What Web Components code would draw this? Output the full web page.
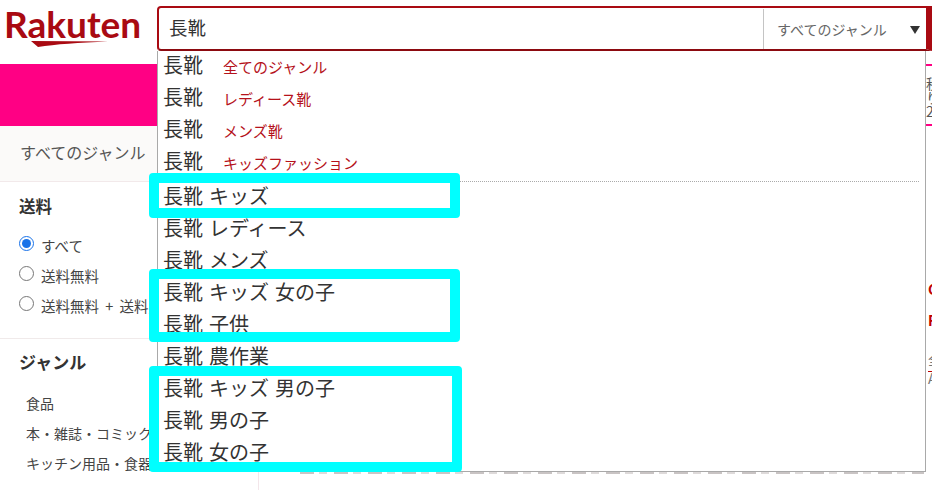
<!DOCTYPE html>
<html lang="ja">
<head>
<meta charset="utf-8">
<title>Rakuten</title>
<style>
  html, body { margin: 0; padding: 0; background: #fff; height: 100%; overflow: hidden; }
  body { font-family: "Noto Sans CJK JP", "Liberation Sans", sans-serif; color: #333; }
</style>
</head>
<body>
<rk-page>
  <rk-header slot="header"></rk-header>
  <rk-banner slot="banner"></rk-banner>
  <rk-sidebar slot="side"></rk-sidebar>
  <rk-main slot="main"></rk-main>
</rk-page>

<script>
const JP = `"Noto Sans CJK JP", "Liberation Sans", sans-serif`;

class RkPage extends HTMLElement {
  constructor() {
    super();
    this.attachShadow({ mode: "open" }).innerHTML = `
      <style>
        :host { display: block; width: 932px; height: 490px; overflow: hidden; position: relative; }
        .body { display: grid; grid-template-columns: 259px 1fr; height: 364px; }
      </style>
      <slot name="header"></slot>
      <slot name="banner"></slot>
      <div class="body">
        <slot name="side"></slot>
        <slot name="main"></slot>
      </div>`;
  }
}

class RkHeader extends HTMLElement {
  constructor() {
    super();
    this.attachShadow({ mode: "open" }).innerHTML = `
      <style>
        :host { display: flex; height: 64px; box-sizing: border-box; padding: 6px 0 0 4px; gap: 21px; align-items: flex-start; }
        .logo { width: 132px; height: 44px; position: relative; color: #a90a12; flex: none; }
        .word { font: 700 37px/40px "Lato", sans-serif; letter-spacing: 0; display: block; margin-top: -2px; white-space: nowrap; }
        svg { position: absolute; left: 0; top: 32px; }
      </style>
      <div class="logo">
        <span class="word">Rakuten</span>
        <svg width="132" height="14" viewBox="0 0 132 14"><path d="M27 3 L104 3.5 Q60 5 34 9 Z" fill="#a90a12"/></svg>
      </div>
      <rk-search></rk-search>`;
  }
}

class RkSearch extends HTMLElement {
  constructor() {
    super();
    this.attachShadow({ mode: "open" }).innerHTML = `
      <style>
        :host { display: block; position: relative; width: 775px; flex: none; }
        .box { height: 45px; box-sizing: border-box; border: 2px solid #a90a12; border-right-width: 6px; border-bottom-color: #8c0a10; border-radius: 4px 0 0 4px; display: flex; align-items: center; background: #fff; }
        .q { flex: 1; padding-left: 10px; font: 400 18.5px/24px ${JP}; color: #333; margin-top: -4px; }
        .genre { width: 163px; box-sizing: border-box; height: 40px; border-left: 1px solid #c4c4c4; display: flex; align-items: center; padding-left: 13px; font: 400 14px/20px ${JP}; color: #666; }
        .arrow { margin-left: auto; margin-right: 6px; margin-top: 2px; width: 0; height: 0; border: 5.5px solid transparent; border-top: 8px solid #333; border-bottom: 0; }
      </style>
      <div class="box">
        <div class="q">長靴</div>
        <div class="genre">すべてのジャンル<span class="arrow"></span></div>
      </div>
      <rk-suggest></rk-suggest>`;
  }
}

const SCOPED = ["全てのジャンル", "レディース靴", "メンズ靴", "キッズファッション"];
const PLAIN = ["長靴 キッズ", "長靴 レディース", "長靴 メンズ", "長靴 キッズ 女の子", "長靴 子供", "長靴 農作業", "長靴 キッズ 男の子", "長靴 男の子", "長靴 女の子"];

class RkSuggest extends HTMLElement {
  constructor() {
    super();
    const scoped = SCOPED.map(s => `<div class="row"><span class="kw">長靴</span><span class="scope">${s}</span></div>`).join("");
    const plain = PLAIN.map(s => `<div class="row">${s}</div>`).join("");
    this.attachShadow({ mode: "open" }).innerHTML = `
      <style>
        :host { display: block; position: absolute; left: 0; top: 45px; width: 769px; height: 421px; box-sizing: border-box; background: #fff; border: 1px solid #a9a9a9; border-top: 0; z-index: 5; }
        .row { height: 32px; box-sizing: border-box; padding-left: 5px; font: 400 20px/28px ${JP}; color: #333; white-space: pre; word-spacing: 1.5px; }
        .kw { display: inline-block; width: 60px; }
        .scope { font-size: 15px; color: #b5121b; word-spacing: 0; }
        hr { border: 0; border-top: 1px dotted #aaa; margin: 2px 6px 0 0; height: 0; }
        .mark { position: absolute; box-sizing: border-box; border: 10px solid #00ffff; border-radius: 4px; pointer-events: none; }
      </style>
      ${scoped}<hr>${plain}
      <div class="mark" style="left:-9px;top:122px;width:311px;height:45px"></div>
      <div class="mark" style="left:-9px;top:218px;width:311px;height:73px"></div>
      <div class="mark" style="left:-9px;top:315px;width:313px;height:106px"></div>`;
  }
}

class RkBanner extends HTMLElement {
  constructor() {
    super();
    this.attachShadow({ mode: "open" }).innerHTML = `
      <style>
        :host { display: flex; height: 62px; }
        .pink { flex: 1; background: #ff0084; }
        .ad { width: 6px; background: #fff; border-top: 2px solid #ff0084; border-bottom: 2px solid #ff0084; box-sizing: border-box; font: 400 14px/14px ${JP}; color: #555; overflow: hidden; padding-top: 10px; white-space: pre; }
        .gap { width: 769px; background: #fff; }
      </style>
      <div class="pink"></div><div class="gap"></div><div class="ad">税
り
2</div>`;
  }
}

class RkSidebar extends HTMLElement {
  constructor() {
    super();
    this.attachShadow({ mode: "open" }).innerHTML = `
      <style>
        :host { display: block; border-right: 1px solid #f3e6ea; overflow: hidden; font-family: ${JP}; color: #333; }
        .crumb { height: 56px; box-sizing: border-box; background: #fbfaf9; border-bottom: 1px solid #f2e9ea; padding: 14px 0 0 20px; font-size: 16px; line-height: 24px; color: #555; }
        .sec { border-bottom: 1px solid #f0eaea; padding: 12px 0 0 19px; height: 157px; box-sizing: border-box; }
        h3 { margin: 0; font-size: 16.5px; line-height: 24px; font-weight: 700; color: #333; }
        label { display: flex; align-items: center; height: 30px; font-size: 14.5px; color: #444; white-space: pre; word-spacing: 3px; }
        .first { margin-top: 12px; }
        input { margin: 0 7px 3px 0; width: 15px; height: 15px; accent-color: #1a73e8; flex: none; }
        .gen { padding: 10px 0 0 19px; }
        .gen h3 { font-size: 17px; line-height: 26px; }
        ul { list-style: none; margin: 13px 0 0 7px; padding: 0; font-size: 14px; line-height: 30px; color: #444; white-space: nowrap; }
      </style>
      <div class="crumb">すべてのジャンル</div>
      <div class="sec">
        <h3>送料</h3>
        <label class="first"><input type="radio" name="ship" checked>すべて</label>
        <label><input type="radio" name="ship">送料無料</label>
        <label><input type="radio" name="ship">送料無料 + 送料別</label>
      </div>
      <div class="gen">
        <h3>ジャンル</h3>
        <ul><li>食品</li><li>本・雑誌・コミック</li><li>キッチン用品・食器</li></ul>
      </div>`;
  }
}

// what is left of the result column: slivers beside and under the open dropdown
class RkMain extends HTMLElement {
  constructor() {
    super();
    this.attachShadow({ mode: "open" }).innerHTML = `
      <style>
        :host { display: block; position: relative; overflow: hidden; }
        .side { position: absolute; left: 669px; top: 0; width: 40px; font: 700 14px/20px ${JP}; color: #bf0000; white-space: pre; }
        .side span { position: absolute; left: 0; }
        .g { color: #777; font-weight: 400; }
        .rule { position: absolute; left: 0; width: 6px; height: 1px; background: #bf0000; }
        .under { position: absolute; left: 41px; right: 8px; top: 346px; height: 2px; background: repeating-linear-gradient(90deg, #c9c4c4 0 14px, #fff 14px 19px, #dedada 19px 27px, #fff 27px 34px); }
      </style>
      <div class="side">
        <span style="top:153px">G</span>
        <span style="top:184px">F</span>
        <span class="g" style="top:223px">全</span>
        <div class="rule" style="top:245px"></div>
        <span class="g" style="top:242px">A</span>
      </div>
      <div class="under"></div>`;
  }
}

customElements.define("rk-suggest", RkSuggest);
customElements.define("rk-search", RkSearch);
customElements.define("rk-header", RkHeader);
customElements.define("rk-banner", RkBanner);
customElements.define("rk-sidebar", RkSidebar);
customElements.define("rk-main", RkMain);
customElements.define("rk-page", RkPage);
</script>
</body>
</html>
